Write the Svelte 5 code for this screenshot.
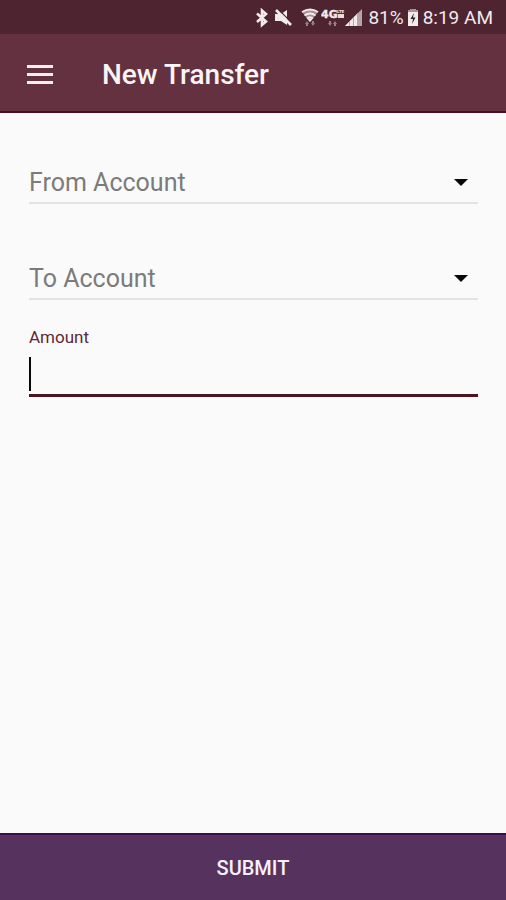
<script>
  const accounts = [
    { id: 'from', label: 'From Account' },
    { id: 'to', label: 'To Account' }
  ];
  let chosen = $state({ from: '', to: '' });
  let amount = $state('');
</script>

<div class="screen">
  <div class="status">
    <svg class="bt" width="14" height="20" viewBox="0 0 14 20" aria-hidden="true">
      <path d="M2 5.5 L11 13.5 L7 17 V2.5 L11 6 L2 14" fill="none" stroke="#f3eaec" stroke-width="2.6" />
    </svg>
    <svg class="mute" width="18" height="20" viewBox="0 0 18 20" aria-hidden="true">
      <path d="M1 6 H7 L13 2 V17 L7 13 H1 Z" fill="#f3eaec" />
      <path d="M4 1 L18 15" stroke="#4d2430" stroke-width="1.2" />
      <path d="M2 2 L17 17" stroke="#f3eaec" stroke-width="2.6" />
    </svg>
    <svg class="wifi" width="18" height="20" viewBox="0 0 18 20" aria-hidden="true">
      <path d="M1 4 Q9 -1 17 4 L9 14 Z" fill="#a8929a" />
      <path d="M1 4 Q9 -1 17 4 M3.5 7.5 Q9 3.5 14.5 7.5 M6 10.5 Q9 8 12 10.5" fill="none" stroke="#f3eaec" stroke-width="2" />
      <path d="M9 14 L6 10.5 H12 Z" fill="#f3eaec" />
      <path d="M6 13 L8 16 H7 V18 H5 V16 H4 Z M12 18 L10 15 H11 V13 H13 V15 H14 Z" fill="#97808a" />
    </svg>
    <svg class="lte" width="24" height="20" viewBox="0 0 24 20" role="img" aria-label="4G LTE">
      <text x="0" y="10" class="gen">4G</text>
      <text x="16" y="5" class="sub">LTE</text>
      <path d="M17 6 H23 V10 H17 Z" fill="#e6dcdf" />
      <path d="M9 18 L7 15 H8 V13 H10 V15 H11 Z M14 13 L16 16 H15 V18 H13 V16 H12 Z" fill="#97808a" />
    </svg>
    <svg class="signal" width="18" height="20" viewBox="0 0 18 20" aria-hidden="true">
      <path d="M0 18 L17 1 V18 Z" fill="#b5a4a9" />
      <path d="M0 18 L13 5 V18 Z" fill="#f3eaec" />
      <path d="M4.5 13 V18 M8.5 9 V18 M12.5 5 V18" stroke="#b5a4a9" stroke-width="1" />
    </svg>
    <span>81%</span>
    <svg class="battery" width="12" height="20" viewBox="0 0 12 20" aria-hidden="true">
      <path d="M3 1 H9 V2 H11 V5 H1 V2 H3 Z" fill="#a8929a" />
      <path d="M1 4 H11 V18 H1 Z" fill="#f3eaec" />
      <path d="M7 5 L3.5 11 H6 L5 16 L8.5 9.5 H6 Z" fill="#2d2226" />
    </svg>
    <span>8:19 AM</span>
  </div>

  <header>
    <button class="menu" type="button" aria-label="Open menu">
      <svg width="28" height="22" viewBox="0 0 28 22" aria-hidden="true">
        <path d="M1 2.5 H27 M1 10.5 H27 M1 18.5 H27" stroke="#f8eff1" stroke-width="3" />
      </svg>
    </button>
    <h1>New Transfer</h1>
  </header>

  <form id="transfer" onsubmit={(e) => e.preventDefault()}>
    {#each accounts as a (a.id)}
      <div class="picker">
        <select id={a.id} aria-label={a.label} bind:value={chosen[a.id]}>
          <option value="">{a.label}</option>
        </select>
        <svg class="arrow" width="14" height="8" viewBox="0 0 14 8" aria-hidden="true">
          <path d="M0 0 H14 L7 7 Z" fill="#080808" />
        </svg>
      </div>
    {/each}
    <label for="amount">Amount</label>
    <div class="entry">
      <input id="amount" type="text" inputmode="decimal" bind:value={amount} />
      {#if !amount}<span class="cursor"></span>{/if}
    </div>
  </form>

  <button class="submit" type="submit" form="transfer">SUBMIT</button>
</div>

<style>
  :global(body) {
    margin: 0;
    background: #fafafa;
  }
  .screen {
    display: flex;
    flex-direction: column;
    min-height: 100vh;
    font-family: Roboto, 'Liberation Sans', sans-serif;
    background: #fafafa;
  }
  .status {
    display: flex;
    align-items: center;
    justify-content: flex-end;
    height: 34px;
    padding: 2px 13px 0 0;
    box-sizing: border-box;
    background: #4d2430;
    color: #f3eaec;
    font-size: 19px;
    line-height: 24px;
  }
  .status svg {
    flex: none;
  }
  .bt {
    margin-right: 5px;
  }
  .mute {
    margin-right: 9px;
  }
  .wifi {
    margin-right: 2px;
  }
  .signal {
    margin-right: 5px;
  }
  .battery {
    margin: 0 4px 0 3px;
  }
  .gen {
    font: bold 11px 'DejaVu Sans', sans-serif;
    fill: #f3eaec;
    stroke: #f3eaec;
    stroke-width: 0.4;
  }
  .sub {
    font: bold 4px 'DejaVu Sans', sans-serif;
    fill: #f3eaec;
  }
  header {
    display: flex;
    align-items: center;
    height: 79px;
    padding: 4px 26px 0;
    box-sizing: border-box;
    background: #633140;
    border-bottom: 2px solid #4f0c20;
  }
  button {
    border: 0;
    font-family: inherit;
    cursor: pointer;
  }
  .menu {
    display: flex;
    padding: 0;
    background: none;
  }
  h1 {
    margin: 0 0 0 48px;
    color: #fbf4f5;
    font-size: 28px;
    font-weight: 500;
    line-height: 32px;
  }
  form {
    flex: 1;
    padding: 48px 28px 0 29px;
  }
  .picker {
    position: relative;
    margin-bottom: 53px;
  }
  .picker + label {
    margin-top: -26px;
  }
  select {
    display: block;
    width: 100%;
    height: 43px;
    padding: 1px 36px 0 0;
    border: 0;
    border-bottom: 2px solid #e3e3e3;
    border-radius: 0;
    appearance: none;
    background: none;
    color: #7b7b7b;
    font: 400 25px Roboto, 'Liberation Sans', sans-serif;
    outline: none;
  }
  .arrow {
    position: absolute;
    top: 18px;
    right: 10px;
    pointer-events: none;
  }
  label {
    display: block;
    color: #5e2836;
    font-size: 17px;
    line-height: 20px;
  }
  .entry {
    position: relative;
    padding-top: 8px;
  }
  input {
    display: block;
    width: 100%;
    height: 42px;
    padding: 0;
    box-sizing: border-box;
    border: 0;
    border-bottom: 3px solid #4d1420;
    border-radius: 0;
    background: none;
    color: #212121;
    font: 400 25px Roboto, 'Liberation Sans', sans-serif;
    outline: none;
  }
  .cursor {
    position: absolute;
    left: 0;
    bottom: 6px;
    width: 2px;
    height: 34px;
    background: #080808;
    pointer-events: none;
  }
  .submit {
    height: 67px;
    padding: 0;
    border-top: 2px solid #3c0c48;
    background: #56335e;
    color: #f7f0fa;
    font-size: 20px;
    font-weight: 500;
    line-height: 24px;
  }
</style>
